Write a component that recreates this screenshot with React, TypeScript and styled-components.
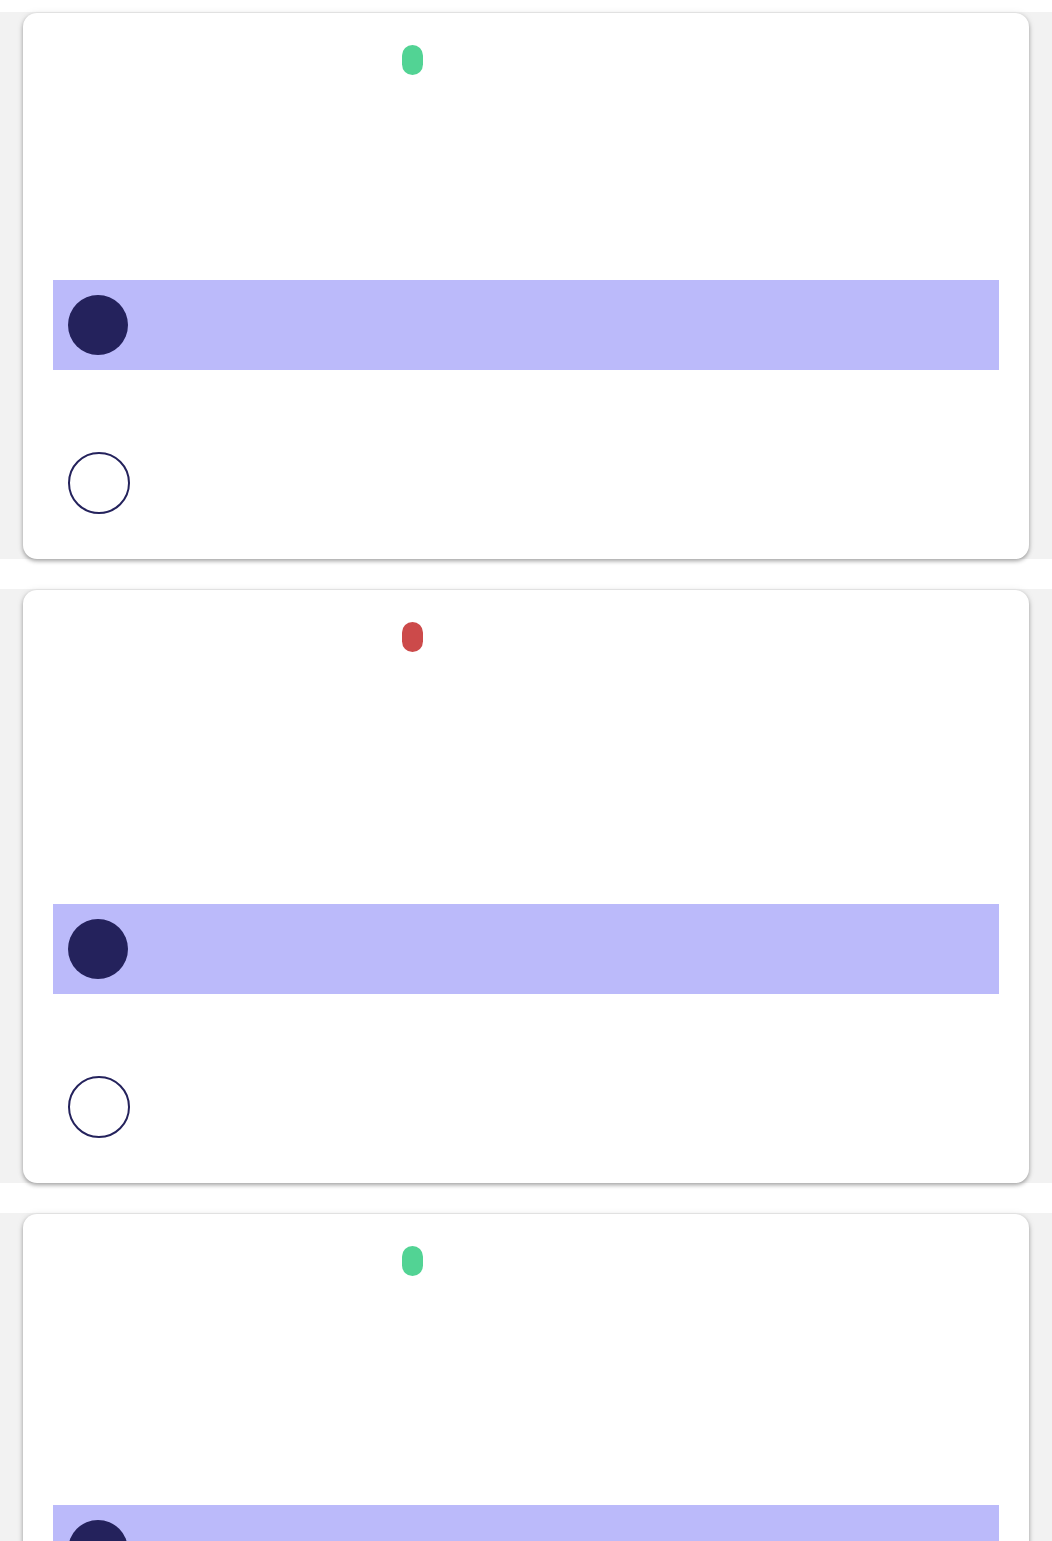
import React from 'react';
import styled, { createGlobalStyle } from 'styled-components';

const GlobalStyle = createGlobalStyle`
    html, body {
        margin: 0;
        padding: 0;
        background: #ffffff;
        font-family: "Roboto", "Liberation Sans", sans-serif;
    }
    #root {
        padding-top: 12px;
    }
`;

const Section = styled.section`
    background: #f2f2f2;
    padding: 1px 23px 0 23px;
    margin-bottom: 30px;
`;

const Card = styled.div`
    background: #ffffff;
    border-radius: 14px;
    padding: 32px 30px 31px 30px;
    box-shadow: 0 2px 4px rgba(0, 0, 0, 0.35), 0 0 8px rgba(0, 0, 0, 0.06);
`;

const Status = styled.div<{ ok: boolean }>`
    width: 21px;
    height: 30px;
    margin-left: 349px;
    border-radius: 11px;
    background: ${ props => props.ok ? '#52d394' : '#cc4a4a' };
`;

const Question = styled.div<{ lines: number }>`
    height: ${ props => 205 + props.lines * 23.5 }px;
`;

const Answers = styled.div`
    display: flex;
    flex-direction: column;
    gap: 68px;
`;

const Option = styled.div<{ selected: boolean }>`
    display: flex;
    align-items: center;
    height: 90px;
    padding: 0 15px;
    background: ${ props => props.selected ? '#bbbafa' : 'transparent' };
`;

const Bullet = styled.span<{ filled: boolean }>`
    display: block;
    box-sizing: border-box;
    width: ${ props => props.filled ? '60px' : '62px' };
    height: ${ props => props.filled ? '60px' : '62px' };
    border-radius: 50%;
    background: ${ props => props.filled ? '#24225c' : '#ffffff' };
    border: ${ props => props.filled ? 'none' : '2px solid #24225c' };
`;

const items = [
    { ok: true, lines: 0 },
    { ok: false, lines: 2 },
    { ok: true, lines: 1 },
];

export default function App() {
    return (
        <>
            <GlobalStyle />
            { items.map((item, i) => (
                <Section key = { i }>
                    <Card>
                        <Status ok = { item.ok } />
                        <Question lines = { item.lines } />
                        <Answers>
                            <Option selected = { true }><Bullet filled = { true } /></Option>
                            <Option selected = { false }><Bullet filled = { false } /></Option>
                        </Answers>
                    </Card>
                </Section>
            )) }
        </>
    );
}
